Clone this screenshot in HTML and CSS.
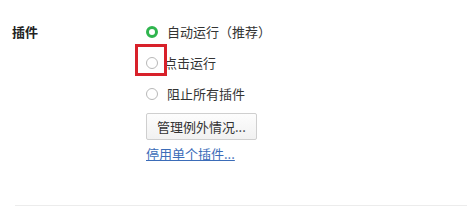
FILE: index.html
```html
<!DOCTYPE html>
<html lang="zh-CN">

<head>
    <meta charset="UTF-8">
    <title>插件</title>
    <link rel="stylesheet" href="styles.css">
</head>

<body>
    <div class="section">
        <div class="section-title">插件</div>
        <div class="section-body">
            <label class="radio-row">
                <span class="radio checked"></span>
                <span class="radio-text">自动运行（推荐）</span>
            </label>
            <label class="radio-row">
                <span class="radio highlight"></span>
                <span class="radio-text tight">点击运行</span>
            </label>
            <label class="radio-row">
                <span class="radio"></span>
                <span class="radio-text">阻止所有插件</span>
            </label>
            <button class="btn">管理例外情况...</button>
            <a href="#" class="link">停用单个插件...</a>
        </div>
    </div>
    <div class="divider"></div>
</body>

</html>
```

FILE: styles.css
```css
body {
    margin: 0;
    font-family: "Noto Sans CJK SC", "Microsoft YaHei", sans-serif;
    font-size: 13px;
    color: #333;
    background: #fff;
    width: 467px;
    height: 208px;
    overflow: hidden;
}

.section {
    display: flex;
    padding: 22px 0 0 12px;
    height: 205px;
    box-sizing: border-box;
}

.section-title {
    width: 134px;
    font-weight: bold;
    color: #222;
    line-height: 20px;
}

.section-body {
    display: flex;
    flex-direction: column;
    align-items: flex-start;
}

.radio-row {
    display: flex;
    align-items: center;
    height: 20px;
    margin-bottom: 11px;
    cursor: pointer;
}

.radio {
    position: relative;
    width: 12px;
    height: 12px;
    border: 1px solid #b8b8b8;
    border-radius: 50%;
    box-sizing: border-box;
    margin-right: 9px;
}

.radio.checked {
    border: 3.5px solid #2fb54e;
    background: #fff;
}

.radio.highlight::after {
    content: "";
    position: absolute;
    left: -12px;
    top: -14px;
    width: 26px;
    height: 26px;
    border: 3px solid #d8212a;
}

.radio-text {
    line-height: 20px;
}

.radio-text.tight {
    margin-left: -3px;
}

.btn {
    margin-top: -2px;
    height: 27px;
    padding: 0 10px;
    font-family: inherit;
    font-size: 13px;
    color: #333;
    background: linear-gradient(#fdfdfd, #f1f1f1);
    border: 1px solid #cfcfcf;
    border-radius: 2px;
}

.link {
    margin-top: 5px;
    color: #3b6cb8;
    line-height: 18px;
}

.divider {
    margin-left: 15px;
    border-top: 1px solid #ececec;
}
```
